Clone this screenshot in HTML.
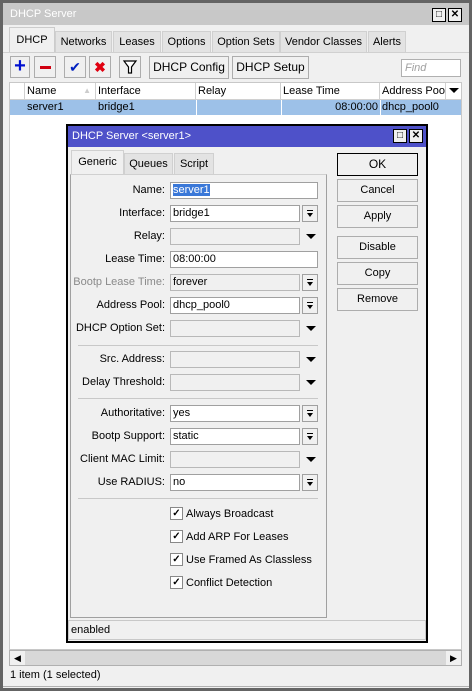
<!DOCTYPE html>
<html><head><style>
*{box-sizing:border-box;margin:0;padding:0}
body{width:472px;height:691px;position:relative;background:#fff;font-family:"Liberation Sans",sans-serif;font-size:11px;color:#000;overflow:hidden}
.a{position:absolute}
.btn{position:absolute;background:#f0f0f0;border:1px solid #adadad;text-align:center;line-height:20px;white-space:nowrap}
.tab{position:absolute;background:#e3e3e3;border:1px solid #d0d0d0;border-bottom:none;text-align:center;line-height:24px;white-space:nowrap}
.lbl{position:absolute;right:307px;text-align:right;white-space:nowrap;line-height:17px}
.fld{position:absolute;left:170px;height:17px;border:1px solid #a0a0a0;background:#fff;line-height:15px;padding-left:2px}
.dis{background:#f0f0f0;border-color:#b8b8b8}
.dd{position:absolute;left:302px;width:16px;height:17px;border:1px solid #a0a0a0;background:#f0f0f0}
.dd::after{content:"";position:absolute;left:4px;top:4px;width:6px;height:7px;background:linear-gradient(#000,#000) 0 0/6px 1px no-repeat}
.dd i{position:absolute;left:4px;top:7px;width:0;height:0;border-left:3px solid transparent;border-right:3px solid transparent;border-top:4px solid #000}
.tri{position:absolute;left:306px;width:0;height:0;border-left:5px solid transparent;border-right:5px solid transparent;border-top:5px solid #000}
.sep{position:absolute;left:78px;width:240px;height:1px;background:#c8c8c8}
.cb{position:absolute;left:170px;width:13px;height:13px;border:1px solid #888;background:#fff;font-size:10px;line-height:11px;text-align:center;font-weight:bold}
.cl{position:absolute;left:186px;line-height:14px;white-space:nowrap}
.hd{position:absolute;top:83px;height:16px;border-right:1px solid #d0d0d0;line-height:16px;padding-left:2px;background:#fff;overflow:hidden;white-space:nowrap}
.xb{position:absolute;width:14px;height:14px;border:1px solid #000;background:#f0f0f0;font-size:10px;line-height:12px;text-align:center;font-weight:bold}
</style></head><body>
<div class="a" style="left:0;top:0;width:472px;height:691px;background:#f0f0f0;border:3px solid #646464"></div>
<div class="a" style="left:3px;top:3px;width:466px;height:22px;background:#c8c8c8;color:#fff;line-height:22px;padding-left:7px">DHCP Server</div>
<div class="xb" style="left:432px;top:8px">□</div><div class="xb" style="left:448px;top:8px">✕</div>
<div class="tab" style="left:9px;top:27px;width:46px;height:26px;background:#f0f0f0;border-color:#ccc">DHCP</div>
<div class="tab" style="left:55px;top:31px;width:57px;height:21px;line-height:21px">Networks</div>
<div class="tab" style="left:113px;top:31px;width:48px;height:21px;line-height:21px">Leases</div>
<div class="tab" style="left:162px;top:31px;width:49px;height:21px;line-height:21px">Options</div>
<div class="tab" style="left:212px;top:31px;width:68px;height:21px;line-height:21px">Option Sets</div>
<div class="tab" style="left:280px;top:31px;width:87px;height:21px;line-height:21px">Vendor Classes</div>
<div class="tab" style="left:368px;top:31px;width:38px;height:21px;line-height:21px">Alerts</div>
<div class="a" style="left:3px;top:52px;width:466px;height:1px;background:#d0d0d0"></div>
<div class="btn" style="left:10px;top:56px;width:20px;height:22px;color:#0010d0;font-weight:bold;font-size:20px;line-height:19px">+</div>
<div class="btn" style="left:34px;top:56px;width:22px;height:22px"><div class="a" style="left:5px;top:9px;width:11px;height:3px;background:#d00010"></div></div>
<div class="btn" style="left:64px;top:56px;width:22px;height:22px;color:#0020c0;font-size:14px">✔</div>
<div class="btn" style="left:89px;top:56px;width:22px;height:22px;color:#e00010;font-size:14px;font-weight:bold">✖</div>
<div class="btn" style="left:119px;top:56px;width:22px;height:22px"><svg width="20" height="20"><path d="M4 4h12l-4.5 6v6h-3v-6z" fill="#fff" stroke="#000" stroke-width="1.2"/></svg></div>
<div class="btn" style="left:149px;top:56px;width:80px;height:23px;font-size:12px">DHCP Config</div>
<div class="btn" style="left:232px;top:56px;width:77px;height:23px;font-size:12px">DHCP Setup</div>
<div class="a" style="left:401px;top:59px;width:60px;height:18px;border:1px solid #b0b0b0;background:#fff;color:#a0a0a0;font-style:italic;padding-left:3px;line-height:16px">Find</div>
<div class="a" style="left:9px;top:82px;width:453px;height:568px;background:#fff;border:1px solid #c8c8c8"></div>
<div class="hd" style="left:10px;width:15px"></div>
<div class="hd" style="left:25px;width:71px">Name<span style="position:absolute;right:4px;color:#ccc;font-size:8px">▲</span></div>
<div class="hd" style="left:96px;width:100px">Interface</div>
<div class="hd" style="left:196px;width:85px">Relay</div>
<div class="hd" style="left:281px;width:99px">Lease Time</div>
<div class="hd" style="left:380px;width:66px">Address Pool</div>
<div class="hd" style="left:446px;width:15px;border:none"><div class="tri" style="left:3px;top:5px"></div></div>
<div class="a" style="left:10px;top:99px;width:451px;height:1px;background:#d0d0d0"></div>
<div class="a" style="left:10px;top:100px;width:451px;height:15px;background:#9dc1e8"></div>
<div class="a" style="left:27px;top:100px;line-height:15px">server1</div>
<div class="a" style="left:98px;top:100px;line-height:15px">bridge1</div>
<div class="a" style="left:332px;top:100px;width:46px;text-align:right;line-height:15px">08:00:00</div>
<div class="a" style="left:382px;top:100px;line-height:15px">dhcp_pool0</div>
<div class="a" style="left:196px;top:100px;width:1px;height:15px;background:#fff"></div>
<div class="a" style="left:281px;top:100px;width:1px;height:15px;background:#fff"></div>
<div class="a" style="left:380px;top:100px;width:1px;height:15px;background:#fff"></div>
<div class="a" style="left:9px;top:650px;width:453px;height:16px;background:#d8d8d8;border:1px solid #b0b0b0"></div>
<div class="a" style="left:10px;top:651px;width:15px;height:14px;background:#f0f0f0;font-size:9px;text-align:center;line-height:14px">◀</div>
<div class="a" style="left:446px;top:651px;width:15px;height:14px;background:#f0f0f0;font-size:9px;text-align:center;line-height:14px">▶</div>
<div class="a" style="left:10px;top:667px;line-height:16px">1 item (1 selected)</div>
<div class="a" style="left:3px;top:686px;width:466px;height:1px;background:#b0b0b0"></div>
<div class="a" style="left:66px;top:124px;width:362px;height:519px;background:#f0f0f0;border:2px solid #000"></div>
<div class="a" style="left:68px;top:126px;width:358px;height:21px;background:#4e51c9;color:#fff;line-height:21px;padding-left:4px">DHCP Server &lt;server1&gt;</div>
<div class="xb" style="left:393px;top:129px">□</div><div class="xb" style="left:409px;top:129px">✕</div>
<div class="tab" style="left:71px;top:150px;width:53px;height:24px;background:#f0f0f0;line-height:22px">Generic</div>
<div class="tab" style="left:124px;top:153px;width:49px;height:21px;line-height:21px">Queues</div>
<div class="tab" style="left:174px;top:153px;width:40px;height:21px;line-height:21px">Script</div>
<div class="a" style="left:70px;top:174px;width:257px;height:444px;border:1px solid #a0a0a0;border-top:1px solid #d0d0d0"></div>
<div class="a" style="left:68px;top:620px;width:358px;height:20px;border:1px solid #c8c8c8;line-height:18px;padding-left:2px">enabled</div>
<div class="btn" style="left:337px;top:153px;width:81px;height:23px;border-color:#000;font-size:12px">OK</div>
<div class="btn" style="left:337px;top:179px;width:81px;height:23px">Cancel</div>
<div class="btn" style="left:337px;top:205px;width:81px;height:23px">Apply</div>
<div class="btn" style="left:337px;top:236px;width:81px;height:23px">Disable</div>
<div class="btn" style="left:337px;top:262px;width:81px;height:23px">Copy</div>
<div class="btn" style="left:337px;top:288px;width:81px;height:23px">Remove</div>

<div class="lbl" style="top:182px">Name:</div><div class="fld" style="top:182px;width:148px"><span style="background:#3a78d8;color:#fff">server1</span></div>
<div class="lbl" style="top:205px">Interface:</div><div class="fld" style="top:205px;width:130px">bridge1</div><div class="dd" style="top:205px"><i></i></div>
<div class="lbl" style="top:228px">Relay:</div><div class="fld dis" style="top:228px;width:130px"></div><div class="tri" style="top:234px"></div>
<div class="lbl" style="top:251px">Lease Time:</div><div class="fld" style="top:251px;width:148px">08:00:00</div>
<div class="lbl" style="top:274px;color:#8a8a8a">Bootp Lease Time:</div><div class="fld dis" style="top:274px;width:130px">forever</div><div class="dd" style="top:274px"><i></i></div>
<div class="lbl" style="top:297px">Address Pool:</div><div class="fld" style="top:297px;width:130px">dhcp_pool0</div><div class="dd" style="top:297px"><i></i></div>
<div class="lbl" style="top:320px">DHCP Option Set:</div><div class="fld dis" style="top:320px;width:130px"></div><div class="tri" style="top:326px"></div>
<div class="sep" style="top:345px"></div>
<div class="lbl" style="top:351px">Src. Address:</div><div class="fld dis" style="top:351px;width:130px"></div><div class="tri" style="top:357px"></div>
<div class="lbl" style="top:374px">Delay Threshold:</div><div class="fld dis" style="top:374px;width:130px"></div><div class="tri" style="top:380px"></div>
<div class="sep" style="top:398px"></div>
<div class="lbl" style="top:405px">Authoritative:</div><div class="fld" style="top:405px;width:130px">yes</div><div class="dd" style="top:405px"><i></i></div>
<div class="lbl" style="top:428px">Bootp Support:</div><div class="fld" style="top:428px;width:130px">static</div><div class="dd" style="top:428px"><i></i></div>
<div class="lbl" style="top:451px">Client MAC Limit:</div><div class="fld dis" style="top:451px;width:130px"></div><div class="tri" style="top:457px"></div>
<div class="lbl" style="top:474px">Use RADIUS:</div><div class="fld" style="top:474px;width:130px">no</div><div class="dd" style="top:474px"><i></i></div>
<div class="sep" style="top:498px"></div>
<div class="cb" style="top:507px">✓</div><div class="cl" style="top:507px">Always Broadcast</div>
<div class="cb" style="top:530px">✓</div><div class="cl" style="top:530px">Add ARP For Leases</div>
<div class="cb" style="top:553px">✓</div><div class="cl" style="top:553px">Use Framed As Classless</div>
<div class="cb" style="top:576px">✓</div><div class="cl" style="top:576px">Conflict Detection</div>
</body></html>
